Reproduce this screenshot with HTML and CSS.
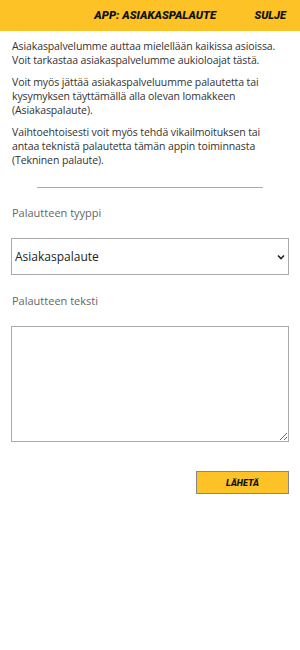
FILE: index.html
```html
<!DOCTYPE html>
<html lang="fi">

<head>
    <meta charset="UTF-8">
    <meta name="viewport" content="width=device-width, initial-scale=1.0">
    <title>App: Asiakaspalaute</title>

    <link rel="stylesheet" href="styles.css">

</head>

<body>

    <div class="otsikko">
        <span class="otsikkoTeksti">APP: ASIAKASPALAUTE</span>
        <span class="sulje">SULJE</span>
    </div>

    <div class="sisalto">
        <p>Asiakaspalvelumme auttaa mielellään kaikissa asioissa. Voit tarkastaa asiakaspalvelumme aukioloajat tästä.</p>
        <p>Voit myös jättää asiakaspalveluumme palautetta tai kysymyksen täyttämällä alla olevan lomakkeen (Asiakaspalaute).</p>
        <p>Vaihtoehtoisesti voit myös tehdä vikailmoituksen tai antaa teknistä palautetta tämän appin toiminnasta (Tekninen palaute).</p>

        <hr class="viiva">

        <form class="lomake">
            <label class="otsake" for="tyyppi">Palautteen tyyppi</label>
            <div class="valinta">
                <select id="tyyppi">
                    <option>Asiakaspalaute</option>
                    <option>Tekninen palaute</option>
                </select>
                <svg class="nuoli" width="8" height="6" viewBox="0 0 8 6">
                    <path d="M1 1.5 L4 4.5 L7 1.5" fill="none" stroke="#222" stroke-width="1.6"/>
                </svg>
            </div>

            <label class="otsake" for="teksti">Palautteen teksti</label>
            <textarea id="teksti"></textarea>

            <div class="napit">
                <button type="button" class="laheta">LÄHETÄ</button>
            </div>
        </form>
    </div>

</body>

</html>
```

FILE: styles.css
```css
body {
    margin: 0;
    font-family: "Open Sans", sans-serif;
    background-color: #fff;
    color: #333;
}

.otsikko {
    display: flex;
    align-items: center;
    height: 31px;
    background-color: #fdc226;
    font-family: Roboto, sans-serif;
    font-weight: 900;
    font-style: italic;
    color: #111;
}

.otsikkoTeksti {
    flex: 1;
    text-align: center;
    padding-left: 56px;
    font-size: 11.3px;
}

.sulje {
    font-size: 11px;
    padding-right: 14px;
}

.sisalto {
    padding: 8px 12px 0;
}

.sisalto p {
    margin: 0 0 8px;
    font-size: 10.5px;
    line-height: 14px;
    letter-spacing: -0.1px;
}

.viiva {
    width: 226px;
    margin: 20px auto 17px;
    border: none;
    border-top: 1px solid #aaa;
}

.lomake {
    display: flex;
    flex-direction: column;
}

.otsake {
    font-size: 11px;
    color: #666;
    margin-bottom: 18px;
}

.valinta {
    position: relative;
    margin: 0 -1px 18px;
}

.valinta select {
    appearance: none;
    width: 100%;
    height: 37px;
    border: 1px solid #aaa;
    border-radius: 0;
    background: #fff;
    padding: 0 3px;
    font-family: "Open Sans", sans-serif;
    font-size: 12px;
    color: #222;
}

.nuoli {
    position: absolute;
    right: 4px;
    top: 16px;
}

textarea {
    box-sizing: border-box;
    height: 116px;
    margin: 0 -1px;
    border: 1px solid #aaa;
    border-radius: 0;
    resize: vertical;
}

.napit {
    display: flex;
    justify-content: flex-end;
    margin: 29px -1px 0;
}

.laheta {
    width: 93px;
    height: 23px;
    background-color: #fdc226;
    border: 1px solid #888;
    font-family: Roboto, sans-serif;
    font-weight: 900;
    font-style: italic;
    font-size: 9px;
    color: #111;
}
```
